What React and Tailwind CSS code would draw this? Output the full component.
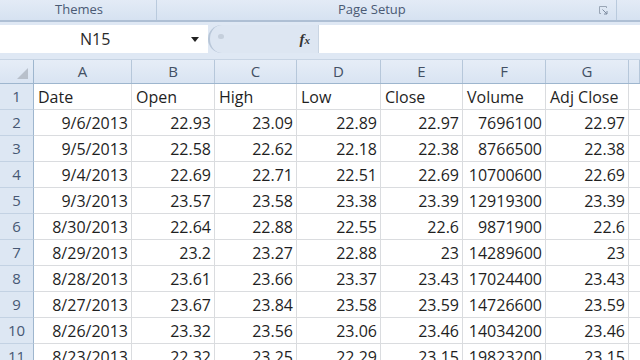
import React from "react";

const rows = [
  ["Date", "Open", "High", "Low", "Close", "Volume", "Adj Close"],
  ["9/6/2013", "22.93", "23.09", "22.89", "22.97", "7696100", "22.97"],
  ["9/5/2013", "22.58", "22.62", "22.18", "22.38", "8766500", "22.38"],
  ["9/4/2013", "22.69", "22.71", "22.51", "22.69", "10700600", "22.69"],
  ["9/3/2013", "23.57", "23.58", "23.38", "23.39", "12919300", "23.39"],
  ["8/30/2013", "22.64", "22.88", "22.55", "22.6", "9871900", "22.6"],
  ["8/29/2013", "23.2", "23.27", "22.88", "23", "14289600", "23"],
  ["8/28/2013", "23.61", "23.66", "23.37", "23.43", "17024400", "23.43"],
  ["8/27/2013", "23.67", "23.84", "23.58", "23.59", "14726600", "23.59"],
  ["8/26/2013", "23.32", "23.56", "23.06", "23.46", "14034200", "23.46"],
  ["8/23/2013", "22.32", "23.25", "22.29", "23.15", "19823200", "23.15"],
];

const cols = ["A", "B", "C", "D", "E", "F", "G", ""];
const gridCols = "grid grid-cols-[34px_98px_83px_82px_84px_82px_83px_83px_1fr]";

export default function App() {
  return (
    <div
      className="w-[640px] h-[360px] overflow-hidden bg-[#dfe8f4] text-[#1f1f1f]"
      style={{ fontFamily: '"Open Sans", "Noto Sans", sans-serif' }}
    >
      {/* Ribbon group labels */}
      <div className="flex h-[22px] bg-gradient-to-b from-[#e3ebf6] to-[#d6e2f1] border-b-2 border-[#aebfd4]">
        <div className="w-[157px] border-r border-[#b9cadd] flex items-center justify-center text-[13px] text-[#4a5a74] pl-[2px]">
          Themes
        </div>
        <div className="w-[460px] border-r border-[#b9cadd] flex items-center text-[13px] text-[#4a5a74]">
          <span className="ml-[181px]">Page Setup</span>
          <svg className="ml-auto mr-[8px]" width="9" height="9" viewBox="0 0 9 9">
            <path d="M0.5 0.5H7.5V2" stroke="#9aa6b6" fill="none" />
            <path d="M0.5 0.5V7.5H2" stroke="#9aa6b6" fill="none" />
            <path d="M3.5 3.5L8 8M8 5V8H5" stroke="#7d8ba0" fill="none" />
          </svg>
        </div>
        <div className="flex-1" />
      </div>

      {/* Formula bar */}
      <div className="mt-[3px] flex h-[28px]">
        <div className="w-[208px] bg-white flex items-center relative">
          <span className="absolute left-[80px] text-[16px] text-[#2a2a2a]">N15</span>
          <svg className="absolute left-[191px] top-[12px]" width="8" height="5" viewBox="0 0 8 5">
            <path d="M0 0H8L4 5Z" fill="#222" />
          </svg>
        </div>
        <div className="w-[110px] bg-[#dde6f2] rounded-l-[14px] border-l-2 border-[#b8c6d8] flex items-center relative">
          <span className="absolute left-[8px] top-[9px] w-[6px] h-[5px] rounded-full bg-[#c5cfdc]" />
          <span
            className="ml-auto mr-[8px] text-[15px] italic font-bold text-[#333] leading-none"
            style={{ fontFamily: '"Liberation Serif", serif' }}
          >
            f<span className="text-[11px]">x</span>
          </span>
        </div>
        <div className="flex-1 bg-white border-l border-[#c9d5e3]" />
      </div>

      {/* Sheet */}
      <div className="mt-[6px] bg-white">
        <div className={`${gridCols} h-[25px] bg-gradient-to-b from-[#e6edf7] to-[#d9e4f2] border-b border-[#9eb6ce] border-t border-t-[#c7d4e4]`}>
          <div className="border-r border-[#9eb6ce] relative">
            <svg className="absolute right-[5px] bottom-[4px]" width="11" height="11" viewBox="0 0 11 11">
              <path d="M11 0V11H0Z" fill="#b8c0cb" />
            </svg>
          </div>
          {cols.map((c, i) => (
            <div
              key={i}
              className="border-r border-[#b6c7da] flex items-center justify-center text-[15px] text-[#435064]"
            >
              {c}
            </div>
          ))}
        </div>
        {rows.map((r, ri) => (
          <div key={ri} className={`${gridCols} h-[26px]`}>
            <div className="bg-[#dde7f3] border-r border-[#9eb6ce] border-b border-b-[#c3d2e3] flex items-center justify-center text-[15px] text-[#475874]">
              {ri + 1}
            </div>
            {r.map((v, ci) => (
              <div
                key={ci}
                className={`border-r border-b border-[#dadcdf] flex items-center text-[16px] whitespace-nowrap ${
                  ri === 0 ? "justify-start pl-[4px]" : "justify-end pr-[3px]"
                }`}
              >
                {v}
              </div>
            ))}
            <div className="border-b border-[#dadcdf]" />
          </div>
        ))}
      </div>
    </div>
  );
}
